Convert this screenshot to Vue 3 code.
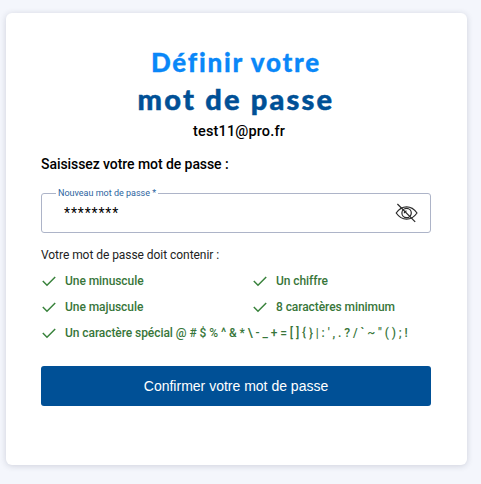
<script setup>
import { ref } from 'vue'

const password = ref('********')

const rules = [
    { name: 'minuscule', label: 'Une minuscule' },
    { name: 'chiffre', label: 'Un chiffre' },
    { name: 'majuscule', label: 'Une majuscule' },
    { name: 'longueur', label: '8 caractères minimum' },
    { name: 'special', label: 'Un caractère spécial', chars: '@ # $ % ^ & * \\ - _ + = [ ] { } | : \' , . ? / ` ~ " ( ) ; !' }
]
</script>
<template>
    <div class="page">
        <form class="card" @submit.prevent>
            <h1>
                <span class="title_top">Définir votre</span>
                <span class="title_bottom">mot de passe</span>
            </h1>
            <div class="email">test11@pro.fr</div>
            <h2>Saisissez votre mot de passe :</h2>
            <fieldset class="field">
                <legend><label for="password">Nouveau mot de passe *</label></legend>
                <div class="field_row">
                    <input id="password" type="text" v-model="password">
                    <button type="button" class="eye">
                        <svg width="24" height="22" viewBox="0 0 24 22" fill="none" stroke="#2a2a2a" stroke-width="1.2">
                            <path d="M1.200 11C4 7 7.600 4.800 11.600 4.800S19.200 7 22 11C19.200 15 15.600 17.200 11.600 17.200S4 15 1.200 11z" />
                            <circle cx="11.600" cy="11" r="4.700" />
                            <path d="M9.300 11.300a2.300 2.300 0 0 1 2.300-2.300" />
                            <path d="M2.400 2L20.200 19.800" />
                        </svg>
                    </button>
                </div>
            </fieldset>
            <p class="hint">Votre mot de passe doit contenir :</p>
            <ul class="rules">
                <li v-for="rule in rules" :key="rule.name" :class="rule.name">
                    <svg width="16" height="12" viewBox="0 0 16 12" fill="none" stroke="#38823b" stroke-width="1.500">
                        <path d="M1.800 6L6 10.200L14.200 2" />
                    </svg>
                    <span class="rule_label">{{ rule.label }}</span>
                    <span v-if="rule.chars" class="rule_chars">{{ rule.chars }}</span>
                </li>
            </ul>
            <button type="submit" class="confirm">Confirmer votre mot de passe</button>
        </form>
    </div>
</template>
<style>
body {
    background-color: #f4f6fc;
}
</style>
<style scoped>
.page {
    box-sizing: border-box;
    height: 484px;
    padding: 13px 14px 19px 6px;
    background-color: #f4f6fc;
    font-family: Roboto, "Liberation Sans", sans-serif;
}

.card {
    box-sizing: border-box;
    display: flex;
    flex-direction: column;
    height: 452px;
    padding: 31px 36px 0px 35px;
    border-radius: 6px;
    background-color: white;
    box-shadow: 0px 1px 6px rgba(40, 45, 70, 0.18);
}

h1 {
    display: flex;
    flex-direction: column;
    align-items: center;
    margin: 0px;
    font-family: Lato, sans-serif;
    font-weight: 900;
    white-space: nowrap;
}

.title_top {
    height: 36px;
    line-height: 36px;
    font-size: 26px;
    letter-spacing: 1.75px;
    color: #0a87f8;
    -webkit-text-stroke: 0.3px #0a87f8;
}

.title_bottom {
    height: 37px;
    line-height: 37px;
    font-size: 29px;
    letter-spacing: 2.2px;
    color: #005096;
    -webkit-text-stroke: 0.5px #005096;
}

.email {
    height: 27px;
    padding-left: 6px;
    line-height: 29px;
    text-align: center;
    font-size: 14.5px;
    font-weight: 500;
    letter-spacing: 0.15px;
    color: black;
}

h2 {
    height: 20px;
    margin: 10px 0px 0px 0px;
    line-height: 20px;
    font-size: 14px;
    font-weight: 500;
    letter-spacing: -0.07px;
    color: black;
}

.field {
    box-sizing: border-box;
    height: 46px;
    min-width: 0;
    margin: 13px 0px 0px 0px;
    padding: 0px 11px 0px 13px;
    border: 1px solid #adb4c8;
    border-radius: 3px;
}

legend {
    height: 12px;
    margin-left: 1px;
    padding: 0px 2px;
    line-height: 12px;
    font-size: 9px;
    color: #2d64a0;
}

legend label {
    display: block;
}

.field_row {
    display: flex;
    align-items: center;
    height: 27px;
}

.field_row input {
    flex: 1;
    min-width: 0;
    padding: 0px 0px 0px 9px;
    border: none;
    outline: none;
    background: none;
    font-family: inherit;
    font-size: 14px;
    letter-spacing: 0.85px;
    color: black;
}

.eye {
    display: flex;
    padding: 0px;
    border: none;
    background: none;
    cursor: pointer;
}

.hint {
    height: 18px;
    margin: 13px 0px 0px 0px;
    line-height: 18px;
    font-size: 12px;
    letter-spacing: -0.05px;
    color: #222;
}

.rules {
    display: grid;
    grid-template-columns: 211px 1fr;
    grid-auto-rows: 26px;
    margin: 4px 0px 0px 0px;
    padding: 0px;
    list-style: none;
    font-size: 12px;
    font-weight: 500;
    letter-spacing: -0.07px;
    color: #38763a;
}

.rules li {
    display: flex;
    align-items: center;
    white-space: nowrap;
}

.rules svg {
    margin-right: 8px;
}

.special {
    grid-column: 1 / 3;
}

.rule_chars {
    margin-left: 3px;
    letter-spacing: -0.06px;
}

.confirm {
    height: 40px;
    margin: 20px 0px 0px 0px;
    border: none;
    border-radius: 3px;
    background-color: #005096;
    font-family: "Liberation Sans", Arial, sans-serif;
    font-size: 14px;
    color: white;
    cursor: pointer;
}
</style>
